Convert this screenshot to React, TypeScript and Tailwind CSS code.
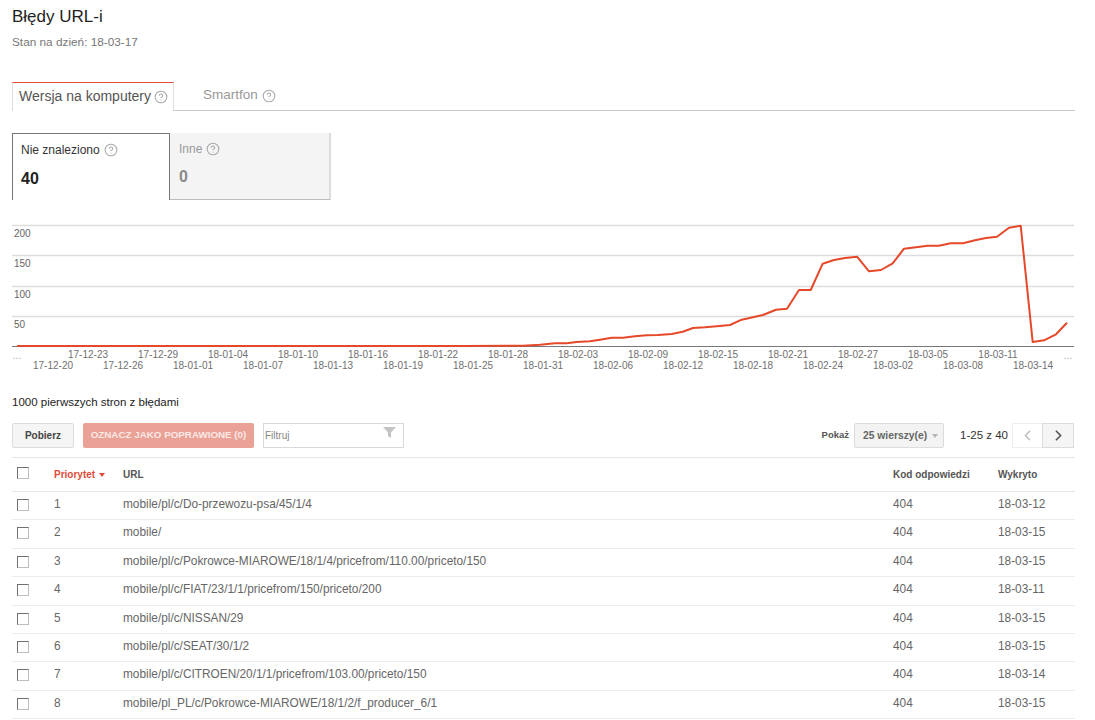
import { CircleHelp, ChevronLeft, ChevronRight } from "lucide-react";

const linePoints =
  "17,346 463,346 523,345.7 540,344.7 555,343.3 566.7,343.3 576.7,342 590,341.3 600,339.7 611.7,337.7 623,337.7 635,336.3 646.7,335.3 658,335 671.7,334 682.7,331.7 693,328 705,327.3 716.7,326.3 730,325 741.7,319.7 763,315 776,309.7 787,308.7 799,290 810.7,290 822.7,263.7 834,260 845,258 857,256.7 869,271.3 881,270 892.7,263.3 904,248.7 916,247.3 927.7,245.7 939,245.7 950.7,243.3 963,243.3 975,240.3 986,238 997,236.7 1009,227.7 1020.7,225.7 1032.7,342 1044,340.3 1056,334.3 1067,322.7";

const upperDates = [
  ["17-12-23", 88], ["17-12-29", 158], ["18-01-04", 228], ["18-01-10", 298], ["18-01-16", 368],
  ["18-01-22", 438], ["18-01-28", 508], ["18-02-03", 578], ["18-02-09", 648], ["18-02-15", 718],
  ["18-02-21", 788], ["18-02-27", 858], ["18-03-05", 928], ["18-03-11", 998],
] as const;

const lowerDates = [
  ["17-12-20", 53], ["17-12-26", 123], ["18-01-01", 193], ["18-01-07", 263], ["18-01-13", 333],
  ["18-01-19", 403], ["18-01-25", 473], ["18-01-31", 543], ["18-02-06", 613], ["18-02-12", 683],
  ["18-02-18", 753], ["18-02-24", 823], ["18-03-02", 893], ["18-03-08", 963], ["18-03-14", 1033],
] as const;

const rows = [
  ["1", "mobile/pl/c/Do-przewozu-psa/45/1/4", "18-03-12"],
  ["2", "mobile/", "18-03-15"],
  ["3", "mobile/pl/c/Pokrowce-MIAROWE/18/1/4/pricefrom/110.00/priceto/150", "18-03-15"],
  ["4", "mobile/pl/c/FIAT/23/1/1/pricefrom/150/priceto/200", "18-03-11"],
  ["5", "mobile/pl/c/NISSAN/29", "18-03-15"],
  ["6", "mobile/pl/c/SEAT/30/1/2", "18-03-15"],
  ["7", "mobile/pl/c/CITROEN/20/1/1/pricefrom/103.00/priceto/150", "18-03-14"],
  ["8", "mobile/pl_PL/c/Pokrowce-MIAROWE/18/1/2/f_producer_6/1", "18-03-15"],
];

const Help = ({ size = 14 }: { size?: number }) => (
  <CircleHelp size={size} strokeWidth={1.8} className="text-[#a8a8a8] shrink-0" />
);

const Checkbox = () => (
  <span className="block w-[12px] h-[12px] border border-[#707070] border-r-[#bdbdbd] border-b-[#bdbdbd] bg-white" />
);

const Chart = () => (
  <svg width="1063" height="155" viewBox="12 220 1063 155" className="block">
    {[225, 255, 286, 316].map((y) => (
      <line key={y} x1="12" x2="1074" y1={y + 0.5} y2={y + 0.5} stroke="#dddddd" strokeWidth="1.4" />
    ))}
    <line x1="12" x2="1074" y1="346.5" y2="346.5" stroke="#777777" />
    <g fontSize="10" fill="#666666" fontFamily="'Liberation Sans', Arial, sans-serif">
      <text x="14" y="237">200</text>
      <text x="14" y="267">150</text>
      <text x="14" y="298">100</text>
      <text x="14" y="328">50</text>
    </g>
    <polyline points={linePoints} fill="none" stroke="#e5492a" strokeWidth="2" strokeLinejoin="round" />
    <g fontSize="10" fill="#707070" textAnchor="middle" fontFamily="'Liberation Sans', Arial, sans-serif">
      {upperDates.map(([d, x]) => (
        <text key={d} x={x} y="358">{d}</text>
      ))}
      {lowerDates.map(([d, x]) => (
        <text key={d} x={x} y="369">{d}</text>
      ))}
      <text x="17" y="359" fill="#aaaaaa">...</text>
      <text x="1068" y="359" fill="#aaaaaa">...</text>
    </g>
  </svg>
);

export default function App() {
  return (
    <div className="w-[1095px] h-[720px] overflow-hidden bg-white font-['Liberation_Sans',Arial,sans-serif] text-[#222222]">
      <div className="pl-3 pr-5">
        <h1 className="pt-[7px] text-[17px] leading-[20px] font-medium text-[#222222]">Błędy URL-i</h1>
        <p className="mt-[8px] text-[11.8px] leading-[14px] text-[#777777]">Stan na dzień: 18-03-17</p>

        <div className="mt-[33px] flex h-[29px] border-b border-[#c8c8c8]">
          <div className="flex items-center gap-[3px] w-[162px] h-[29px] pl-[6px] pb-[1px] bg-white border border-b-0 border-[#dddddd] border-t-[#dd4b39] text-[14px] text-[#555555]">
            Wersja na komputery <Help />
          </div>
          <div className="flex items-center gap-[4px] pl-[29px] h-[28px] pb-[1px] text-[13.5px] text-[#999999]">
            Smartfon <Help />
          </div>
        </div>

        <div className="mt-[22px] flex h-[67px]">
          <div className="w-[158px] border border-b-0 border-[#777777] pl-[8px] pt-[9px]">
            <div className="flex items-center gap-[4px] text-[12px] leading-[14px] text-[#333333]">
              Nie znaleziono <Help />
            </div>
            <div className="mt-[12px] text-[16px] leading-[20px] font-bold text-[#222222]">40</div>
          </div>
          <div className="w-[161px] bg-[#f4f4f4] border-b border-r-2 border-[#bbbbbb] border-r-[#dddddd] pl-[9px] pt-[9px]">
            <div className="flex items-center gap-[4px] text-[12px] leading-[14px] text-[#999999]">
              Inne <Help />
            </div>
            <div className="mt-[11px] text-[16px] leading-[20px] font-bold text-[#8a8a8a]">0</div>
          </div>
        </div>
      </div>

      <div className="pl-3 mt-[20px]">
        <Chart />
      </div>

      <div className="pl-3 pr-5">
        <p className="mt-[20px] text-[11.5px] leading-[14px] text-[#222222]">1000 pierwszych stron z błędami</p>

        <div className="mt-[14px] flex items-center h-[25px]">
          <button className="w-[62px] h-[25px] bg-[#f5f5f5] border border-[#dcdcdc] rounded-[2px] text-[10px] font-bold text-[#444444]">
            Pobierz
          </button>
          <button className="ml-[9px] w-[171px] h-[25px] bg-[#eaa196] rounded-[2px] text-[9.8px] font-bold text-[#fbe9e6]">
            OZNACZ JAKO POPRAWIONE (0)
          </button>
          <div className="relative ml-[9px] w-[141px] h-[25px] border border-[#d9d9d9] pl-[1px] text-[10px] leading-[23px] text-[#888888]">
            Filtruj
            <svg width="13" height="11" viewBox="0 0 13 11" className="absolute right-[7px] top-[3px]">
              <path d="M0 0H13L8 5.5V11L5 9V5.5Z" fill="#c4c4c4" />
            </svg>
          </div>
          <span className="ml-auto text-[9.5px] font-bold text-[#555555]">Pokaż</span>
          <div className="ml-[5px] flex items-center w-[90px] h-[25px] pl-[8px] bg-[#f3f3f3] border border-[#dcdcdc] rounded-[2px] text-[10.3px] font-bold text-[#666666]">
            25 wierszy(e)
            <span className="ml-[5px] border-x-[3px] border-x-transparent border-t-[4px] border-t-[#b5b5b5]" />
          </div>
          <span className="ml-[16px] text-[11.5px] text-[#333333]">1-25 z 40</span>
          <div className="ml-[4px] mr-[1px] flex h-[25px]">
            <div className="flex items-center justify-center w-[30px] border border-r-0 border-[#eeeeee]">
              <ChevronLeft size={17} strokeWidth={2} className="text-[#bbbbbb]" />
            </div>
            <div className="flex items-center justify-center w-[32px] bg-[#f5f5f5] border border-[#dcdcdc]">
              <ChevronRight size={17} strokeWidth={2.4} className="text-[#555555]" />
            </div>
          </div>
        </div>

        <div className="mt-[9px] border-t border-[#e6e6e6]">
          <div className="grid grid-cols-[42px_69px_770px_105px_1fr] items-center h-[34px] border-b border-[#e6e6e6] text-[10px] font-bold text-[#555555]">
            <div className="pl-[5px] -mt-[3px]"><Checkbox /></div>
            <div className="flex items-center gap-[4px] text-[#dd4b39]">
              Priorytet
              <span className="border-x-[3px] border-x-transparent border-t-[4px] border-t-[#dd4b39]" />
            </div>
            <div>URL</div>
            <div>Kod odpowiedzi</div>
            <div>Wykryto</div>
          </div>
          {rows.map(([n, url, date]) => (
            <div
              key={n}
              className="grid grid-cols-[42px_69px_770px_105px_1fr] h-[28.4px] pt-[5px] border-b border-[#ececec] text-[11.85px] leading-[15px] text-[#666666]"
            >
              <div className="pl-[5px] pt-[2px]"><Checkbox /></div>
              <div>{n}</div>
              <div>{url}</div>
              <div>404</div>
              <div>{date}</div>
            </div>
          ))}
        </div>
      </div>
    </div>
  );
}
